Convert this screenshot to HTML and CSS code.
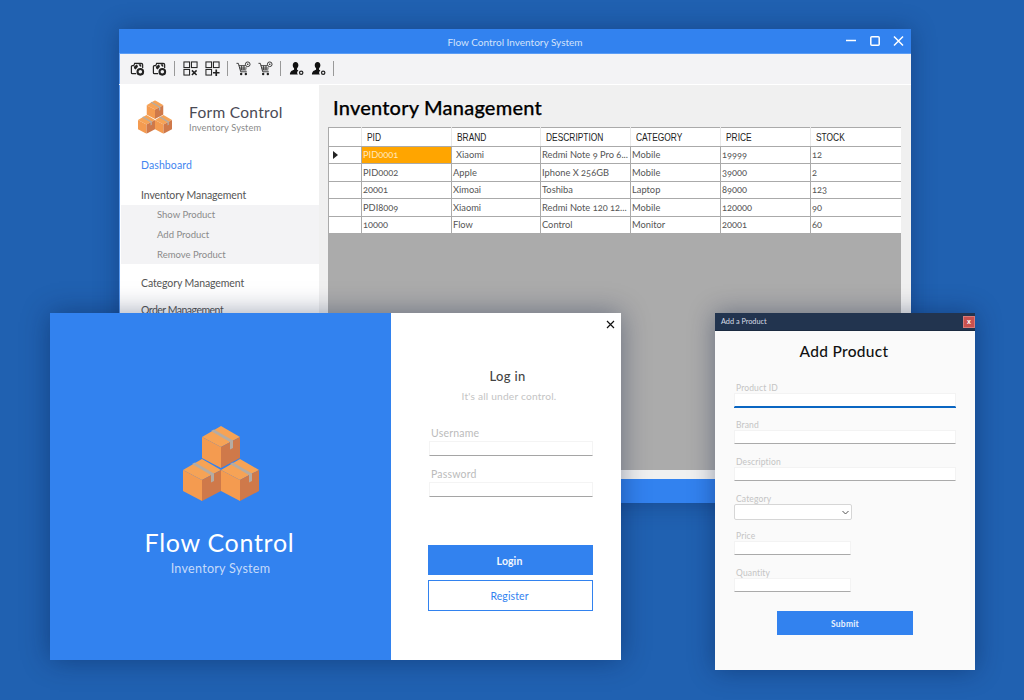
FILE: index.html
```html
<!DOCTYPE html>
<html lang="en">
<head>
<meta charset="utf-8">
<title>Flow Control Inventory System</title>
<link rel="stylesheet" href="styles.css">
</head>
<body>
<svg class="defs" width="0" height="0" aria-hidden="true">
  <symbol id="cube" viewBox="0 0 38 42">
    <path fill="#f6a356" d="M19 0 38 11 19 21 0 11z"/>
    <path fill="#f49b50" d="M0 11 19 21V42L0 32z"/>
    <path fill="#cf794a" d="M38 11 19 21V42L38 32z"/>
    <path fill="#b5aca3" d="M9 5 12 3.500 31 14.500V22L28 23.500V16z"/>
  </symbol>
  <symbol id="boxes" viewBox="0 0 76 75">
    <use href="#cube" x="19" y="0" width="38" height="42"/>
    <use href="#cube" x="0" y="33" width="38" height="42"/>
    <use href="#cube" x="38" y="33" width="38" height="42"/>
  </symbol>
  <symbol id="i-globe" viewBox="0 0 16 16">
    <path fill="none" stroke="#222" stroke-width="1.300" d="M6.500 13.500H2.500A1 1 0 0 1 1.500 12.500V6A1 1 0 0 1 2.500 5H4L5 2.500H12A1.500 1.500 0 0 1 13.500 4V7.500"/>
    <path fill="#222" d="M4 6 7.500 3.500 8.500 6 6 9 4.500 8zM9 3.500H12V6.500L10.500 5.500z"/>
    <circle cx="11" cy="11.500" r="3" fill="none" stroke="#222" stroke-width="2.200"/>
  </symbol>
  <symbol id="i-del" viewBox="0 0 16 16">
    <g fill="none" stroke="#222" stroke-width="1.100"><rect x="1" y="1" width="6" height="6"/><rect x="9" y="1" width="6" height="6"/><rect x="1" y="9" width="6" height="6"/></g>
    <path stroke="#222" stroke-width="1.600" d="M9.500 10 14.500 15M14.500 10 9.500 15"/>
  </symbol>
  <symbol id="i-add" viewBox="0 0 16 16">
    <g fill="none" stroke="#222" stroke-width="1.100"><rect x="1" y="1" width="6" height="6"/><rect x="9" y="1" width="6" height="6"/><rect x="1" y="9" width="6" height="6"/></g>
    <path stroke="#222" stroke-width="1.800" d="M12 9V16M8.500 12.500H15.500"/>
  </symbol>
  <symbol id="i-cart" viewBox="0 0 16 16">
    <path fill="none" stroke="#333" stroke-width="1" d="M.5 2.500H2.500L5 11.500H11.500M3 5H10M3.800 7.500H11.500M4.500 9.500H11M6 5V9.500M8.500 5V9.500"/>
    <circle cx="5.500" cy="13.800" r="1.300" fill="#222"/><circle cx="10.500" cy="13.800" r="1.300" fill="#222"/>
    <circle cx="12.500" cy="3.500" r="2.500" fill="none" stroke="#333" stroke-width="1"/><circle cx="12.500" cy="3.500" r=".8" fill="#222"/>
  </symbol>
  <symbol id="i-user" viewBox="0 0 16 16">
    <path fill="#111" d="M7 1C9 1 10 2.500 10 4.500 10 6 9.300 7.200 8.600 7.800V9.200L10 10A3.200 3.200 0 0 0 9.500 14.500H1C1 11 3 10 5.400 9.200V7.800C4.700 7.200 4 6 4 4.500 4 2.500 5 1 7 1z"/>
    <circle cx="13" cy="12.500" r="1.800" fill="none" stroke="#222" stroke-width="1.300"/>
  </symbol>
</svg>

<section class="win main-win">
  <header class="titlebar">
    <span class="title">Flow Control Inventory System</span>
    <div class="win-ctrls">
      <svg width="14" height="14" viewBox="0 0 14 14"><path stroke="#fff" stroke-width="1.500" d="M2 6.500H12"/></svg>
      <svg width="14" height="14" viewBox="0 0 14 14"><rect x="2.800" y="2.800" width="8.400" height="8.400" rx="1" fill="none" stroke="#fff" stroke-width="1.500"/></svg>
      <svg width="14" height="14" viewBox="0 0 14 14"><path stroke="#fff" stroke-width="1.500" d="M2 2.500 11 11.500M11 2.500 2 11.500"/></svg>
    </div>
  </header>
  <div class="toolbar">
    <svg class="tool"><use href="#i-globe"/></svg>
    <svg class="tool"><use href="#i-globe"/></svg>
    <i class="sep"></i>
    <svg class="tool"><use href="#i-del"/></svg>
    <svg class="tool"><use href="#i-add"/></svg>
    <i class="sep"></i>
    <svg class="tool"><use href="#i-cart"/></svg>
    <svg class="tool"><use href="#i-cart"/></svg>
    <i class="sep"></i>
    <svg class="tool"><use href="#i-user"/></svg>
    <svg class="tool"><use href="#i-user"/></svg>
    <i class="sep"></i>
  </div>
  <div class="main-body">
    <aside class="sidebar">
      <div class="brand">
        <svg class="brand-logo"><use href="#boxes"/></svg>
        <div>
          <div class="brand-name">Form Control</div>
          <div class="brand-sub">Inventory System</div>
        </div>
      </div>
      <a class="nav nav-active">Dashboard</a>
      <a class="nav nav-inv">Inventory Management</a>
      <div class="subnav">
        <a>Show Product</a>
        <a>Add Product</a>
        <a>Remove Product</a>
      </div>
      <a class="nav nav-cat">Category Management</a>
      <a class="nav nav-ord">Order Management</a>
    </aside>
    <main class="content">
      <h1>Inventory Management</h1>
      <div class="grid-view">
        <table>
          <colgroup><col class="c0"><col class="c1"><col class="c2"><col class="c3"><col class="c4"><col class="c5"><col class="c6"></colgroup>
          <thead><tr><th></th><th><span>PID</span></th><th><span>BRAND</span></th><th><span>DESCRIPTION</span></th><th><span>CATEGORY</span></th><th><span>PRICE</span></th><th><span>STOCK</span></th></tr></thead>
          <tbody>
            <tr><td class="rh"><span class="arrow"></span></td><td class="sel">PID0001</td><td class="ind">Xiaomi</td><td>Redmi Note 9 Pro 6...</td><td>Mobile</td><td>19999</td><td>12</td></tr>
            <tr><td class="rh"></td><td>PID0002</td><td>Apple</td><td>Iphone X 256GB</td><td>Mobile</td><td>39000</td><td>2</td></tr>
            <tr><td class="rh"></td><td>20001</td><td>Ximoai</td><td>Toshiba</td><td>Laptop</td><td>89000</td><td>123</td></tr>
            <tr><td class="rh"></td><td>PDI8009</td><td>Xiaomi</td><td>Redmi Note 120 12...</td><td>Mobile</td><td>120000</td><td>90</td></tr>
            <tr><td class="rh"></td><td>10000</td><td>Flow</td><td>Control</td><td>Monitor</td><td>20001</td><td>60</td></tr>
          </tbody>
        </table>
      </div>
    </main>
  </div>
  <div class="status"></div>
</section>

<section class="win login-win">
  <div class="login-hero">
    <svg class="hero-logo"><use href="#boxes"/></svg>
    <div class="hero-name">Flow Control</div>
    <div class="hero-sub">Inventory System</div>
  </div>
  <div class="login-form">
    <svg class="login-close" width="9" height="9" viewBox="0 0 9 9"><path stroke="#111" stroke-width="1.200" d="M1 1 8 8M8 1 1 8"/></svg>
    <div class="login-title">Log in</div>
    <div class="login-sub">It's all under control.</div>
    <label class="l-label l-user">Username</label>
    <input class="l-input" type="text">
    <label class="l-label l-pass">Password</label>
    <input class="l-input" type="password">
    <button class="btn-login">Login</button>
    <button class="btn-register">Register</button>
  </div>
</section>

<section class="win add-win">
  <header class="add-bar">
    <span>Add a Product</span>
    <b class="add-x">x</b>
  </header>
  <div class="add-body">
    <h2>Add Product</h2>
    <div class="field"><label>Product ID</label><input class="wide focus" type="text"></div>
    <div class="field"><label>Brand</label><input class="wide" type="text"></div>
    <div class="field"><label>Description</label><input class="wide" type="text"></div>
    <div class="field"><label>Category</label>
      <div class="select">
        <svg width="7" height="5" viewBox="0 0 7 5"><path fill="none" stroke="#555" stroke-width="1" d="M.5 1 3.500 4 6.500 1"/></svg>
      </div>
    </div>
    <div class="field"><label>Price</label><input class="narrow" type="text"></div>
    <div class="field"><label>Quantity</label><input class="narrow" type="text"></div>
    <button class="btn-submit">Submit</button>
  </div>
</section>
</body>
</html>
```

FILE: styles.css
```css
* { box-sizing: border-box; }
html, body { margin: 0; height: 100%; }
body {
  width: 1024px; height: 700px; overflow: hidden; position: relative;
  background: #2061b1;
  font-family: Lato, "Open Sans", sans-serif;
  font-variant-numeric: oldstyle-nums;
  color: #444;
}
.defs { position: absolute; }
.win { position: absolute; }

/* main window */
.main-win {
  left: 119px; top: 29px; width: 792px; height: 474px;
  background: #f0f0f0; display: flex; flex-direction: column;
  box-shadow: 0 0 22px rgba(10, 40, 90, .45);
}
.titlebar {
  height: 25px; flex: none; background: #3282ef; border-bottom: 1px solid #5b9df5;
  display: flex; align-items: center; justify-content: center; position: relative;
}
.title { font-size: 10px; color: #d3e3fb; margin-top: 2px; }
.win-ctrls { position: absolute; right: 5px; top: 5px; display: flex; gap: 10px; }
.win-ctrls svg { display: block; }
.toolbar {
  height: 30px; flex: none; background: #f3f3f5; border-left: 1px solid #5b9df5;
  display: flex; align-items: center; padding-left: 10px; padding-bottom: 1px;
}
.tool { width: 15px; height: 15px; margin-right: 7px; flex: none; }
.sep { width: 1px; height: 15px; background: #999; margin: 0 8px 0 0; flex: none; }
.main-body { flex: 1; display: flex; min-height: 0; border-top: 1px solid #fff; }
.sidebar {
  width: 200px; flex: none; background: #fff; border-left: 1px solid #5b9df5;
  display: flex; flex-direction: column;
}
.brand { display: flex; align-items: flex-start; padding: 15px 0 0 18px; height: 73px; }
.brand-logo { width: 34px; height: 34px; flex: none; }
.brand-name { font-size: 15.500px; letter-spacing: .3px; color: #4a4a55; margin: 3px 0 0 17px; line-height: 18px; }
.brand-sub { font-size: 9.300px; letter-spacing: .1px; color: #8a8a8a; margin: 1px 0 0 17px; line-height: 11px; }
.nav { display: block; padding-left: 21px; font-size: 10.500px; line-height: 14px; color: #555; }
.nav-active { color: #4285f0; letter-spacing: .1px; }
.nav-inv { margin-top: 16px; letter-spacing: -.1px; }
.subnav {
  margin: 3px 0 0 1px; background: #f3f3f5; height: 59px; padding: 4px 0 3px 36px;
  display: flex; flex-direction: column; justify-content: space-between;
  font-size: 9.500px; color: #8a8a8a; line-height: 12px;
}
.nav-cat { margin-top: 12px; letter-spacing: -.1px; }
.nav-ord { margin-top: 13px; letter-spacing: -.5px; }
.content { flex: 1; padding: 0 10px 9px 9px; display: flex; flex-direction: column; min-width: 0; }
h1 { margin: 10px 0 8px 5px; font-size: 20px; line-height: 24px; font-weight: 500; color: #000; letter-spacing: .2px; -webkit-text-stroke: .25px #000; }
.grid-view { flex: 1; background: #ababab; overflow: hidden; }
table { border-collapse: collapse; table-layout: fixed; width: 573px; background: #fff; }
.c0 { width: 33px; } .c1 { width: 90px; } .c2 { width: 89px; } .c3 { width: 90px; }
.c4 { width: 90px; } .c5 { width: 90px; } .c6 { width: 91px; }
th {
  height: 18.500px; padding: 0 0 0 5px; text-align: left; font: 400 10.500px/12px "Liberation Sans", sans-serif;
  color: #222; border-top: 1px solid #aaa; border-bottom: 1px solid #aaa; border-right: 1px solid #e8e8e8;
}
th span { display: inline-block; transform: scaleX(.8); transform-origin: left center; }
th:first-child { border-left: 1px solid #aaa; }
td {
  height: 17.500px; padding: 1px 0 0 1px; font-size: 9.300px; line-height: 12px; color: #555;
  border: 1px solid #aaa; white-space: nowrap; overflow: hidden;
}
td.sel { background: #ffa500; color: #ffe7bd; }
td.ind { padding-left: 4px; }
td.rh { padding: 0 0 0 4px; }
.arrow { display: block; width: 0; height: 0; border-left: 5px solid #222; border-top: 4px solid transparent; border-bottom: 4px solid transparent; }
.status { height: 24px; flex: none; background: #3282ef; }

/* login */
.login-win {
  left: 50px; top: 313px; width: 571px; height: 347px; background: #fff; display: flex;
  box-shadow: 0 0 26px rgba(0, 20, 60, .4);
}
.login-hero {
  width: 341px; flex: none; background: #3282ef; display: flex; flex-direction: column; align-items: center;
  padding-top: 113px;
}
.hero-logo { width: 76px; height: 75px; flex: none; }
.hero-name { font-size: 25px; letter-spacing: .7px; color: #fff; margin: 25px 2px 0 0; line-height: 32px; }
.hero-sub { font-size: 12.600px; letter-spacing: .25px; color: #c5dafa; margin-top: 3px; line-height: 16px; }
.login-form { flex: 1; position: relative; display: flex; flex-direction: column; padding: 56px 28px 0 37px; }
.login-close { position: absolute; right: 6px; top: 7px; }
.login-title { font-size: 13px; line-height: 15px; color: #444; text-align: center; letter-spacing: .3px; padding-right: 6px; font-weight: 500; }
.login-sub { font-size: 10.200px; line-height: 13px; color: #c4c4c4; text-align: center; margin-top: 6px; padding-right: 3px; letter-spacing: .2px; }
.l-label { font-size: 10.500px; line-height: 13px; color: #bbb; padding-left: 3px; letter-spacing: .2px; }
.l-user { margin-top: 24px; }
.l-pass { margin-top: 12px; }
.l-input {
  display: block; width: 164px; height: 15px; margin: 1px 0 0 1px; padding: 0; background: #fff;
  border: 1px solid #f4f4f4; border-bottom: 1px solid #a5a5a5; outline: 0;
}
.btn-login, .btn-register {
  width: 165px; font: 700 10.500px Lato, sans-serif; letter-spacing: .1px; flex: none; padding: 1px 2px 0 0; display: block;
}
.btn-login { height: 30px; margin-top: 48px; background: #3282ef; border: 0; color: #f2f7fe; }
.btn-register { height: 31px; margin-top: 5px; background: #fff; border: 1px solid #3282ef; color: #3282ef; font-weight: 400; }

/* add product */
.add-win {
  left: 715px; top: 313px; width: 260px; height: 357px; background: #fafafa;
  box-shadow: 0 0 24px rgba(0, 20, 60, .4); display: flex; flex-direction: column;
}
.add-bar {
  height: 18px; flex: none; background: #22344f; border-bottom: 1px solid #1a2a40; color: #d7dde6; font-size: 7.300px;
  display: flex; align-items: center; justify-content: space-between; padding: 0 0 0 6px;
}
.add-x {
  width: 12px; height: 12px; background: #c9514f; color: #fff; border: 1px solid #d97a78; font: 700 7px/10px "Liberation Sans", sans-serif;
  text-align: center; margin-top: 1px;
}
.add-body { flex: 1; padding: 0 19px; display: flex; flex-direction: column; }
h2 { margin: 11px 0 22px; padding-right: 2px; font-size: 15.500px; line-height: 19px; font-weight: 500; color: #111; text-align: center; letter-spacing: .3px; }
.field { height: 37px; flex: none; }
.field label { display: block; font-size: 8.500px; line-height: 10px; color: #c4c4c4; padding-left: 2px; letter-spacing: .15px; }
.field input { display: block; height: 14px; margin: 0; padding: 0; background: #fff; border: 1px solid #f3f3f3; border-bottom: 1px solid #aaa; outline: 0; }
.wide { width: 222px; }
.narrow { width: 117px; }
.field input.focus { border-bottom: 1px solid #0a66c2; box-shadow: 0 1px 0 #0a66c2; }
.select {
  width: 118px; height: 16px; background: #fff; border: 1px solid #d6d6d6; border-radius: 2px;
  display: flex; align-items: center; justify-content: flex-end; padding-right: 2px;
}
.btn-submit {
  width: 136px; height: 24px; margin: 6px 0 0 43px; background: #3282ef; border: 0; color: #e8f1fe; padding: 1px 0 0;
  font: 700 8.500px Lato, sans-serif; letter-spacing: .2px; flex: none;
}
```
